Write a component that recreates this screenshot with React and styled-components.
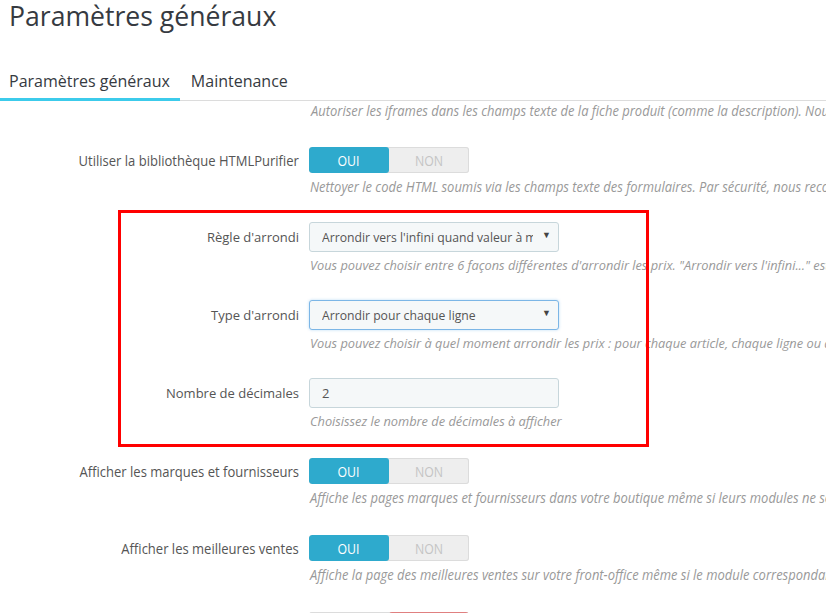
import React from 'react';
import styled, { createGlobalStyle, css } from 'styled-components';

const GlobalStyle = createGlobalStyle`
  html, body {
    margin: 0;
    padding: 0;
    background: #fff;
    overflow: hidden;
  }
  body {
    font-family: 'Open Sans', 'Noto Sans', sans-serif;
    color: #555;
  }
`;

const Page = styled.div`
  width: 826px;
  height: 613px;
  overflow: hidden;
`;

const Title = styled.h1`
  margin: 0;
  padding: 0 9px;
  font-size: 26.6px;
  font-weight: 400;
  line-height: 32px;
  color: #363a41;
  white-space: nowrap;
`;

const TabBar = styled.div`
  display: flex;
  margin-top: 37px;
  border-bottom: 1px solid #dcdcdc;
`;

const Tab = styled.div`
  padding: 0 10px 5px 9px;
  font-size: 16px;
  line-height: 24px;
  color: #363a41;
  border-bottom: 3px solid ${(p) => (p.$active ? '#3ccbeb' : 'transparent')};
  margin-bottom: -1px;
  & + & {
    padding-left: 11px;
  }
`;

const Form = styled.div`
  padding-top: 1px;
`;

const Row = styled.div`
  display: grid;
  grid-template-columns: 299px 1fr;
  column-gap: 10px;
  margin-bottom: ${(p) => p.$gap ?? 26}px;
`;

const Label = styled.div`
  height: ${(p) => p.$h}px;
  display: flex;
  align-items: center;
  justify-content: flex-end;
  font-size: 13px;
  color: #555;
  white-space: nowrap;
`;

/* the plain rows of the original page use a narrower, taller face */
const Narrow = styled.span`
  display: inline-block;
  white-space: nowrap;
  font-size: ${(p) => p.$size || 14}px;
  transform: scaleX(${(p) => p.$scale || 0.9});
  transform-origin: ${(p) => p.$from || 'left'} center;
`;

const Field = styled.div`
  display: flex;
  flex-direction: column;
  align-items: flex-start;
  min-width: 0;
`;

const Help = styled.div`
  margin-top: 5px;
  padding-left: 1px;
  font-size: 12.8px;
  font-style: italic;
  line-height: 17px;
  color: #999;
  white-space: nowrap;
`;

const TopHelp = styled(Help)`
  margin: 0 0 27px 310px;
`;

const Switch = styled.div`
  display: flex;
  width: 160px;
  height: 26px;
  border-radius: 3px;
  overflow: hidden;
  background: #eee;
  box-shadow: inset 0 0 0 1px #dcdcdc;
`;

const SwitchOption = styled.div`
  flex: 1;
  display: flex;
  align-items: center;
  justify-content: center;
  font-size: 14px;
  text-transform: uppercase;
  color: #c4c4c4;
  ${(p) =>
    p.$on &&
    css`
      background: ${p.$tone === 'no' ? '#e08080' : '#2eaacd'};
      color: #fff;
      border-radius: 3px;
    `}
  span {
    display: inline-block;
    transform: scaleX(0.88);
  }
`;

const SelectBox = styled.div`
  position: relative;
  box-sizing: border-box;
  width: 250px;
  height: 30px;
  padding: 0 25px 0 12px;
  display: flex;
  align-items: center;
  background: #f5f8f9;
  border: 1px solid ${(p) => (p.$focus ? '#7cb6e6' : '#c7d6db')};
  border-radius: 3px;
  box-shadow: ${(p) => (p.$focus ? '0 0 3px rgba(102, 175, 233, 0.45)' : 'none')};
  font-size: 12.2px;
  color: #555;
  white-space: nowrap;
`;

const SelectText = styled.span`
  overflow: hidden;
  white-space: nowrap;
  flex: 1;
`;

const Caret = styled.span`
  position: absolute;
  right: 7px;
  top: 7px;
  font-size: 9px;
  line-height: 10px;
  color: #444;
`;

const TextInput = styled.div`
  box-sizing: border-box;
  width: 250px;
  height: 30px;
  padding: 0 12px;
  display: flex;
  align-items: center;
  background: #f5f8f9;
  border: 1px solid #c7d6db;
  border-radius: 3px;
  font-size: 13px;
  color: #555;
`;

const Highlight = styled.div`
  position: relative;
  margin-bottom: 28px;
  & > ${Row}:last-child {
    margin-bottom: 0;
  }
`;

const RedFrame = styled.div`
  position: absolute;
  left: 118px;
  top: -12px;
  width: 531px;
  height: 237px;
  box-sizing: border-box;
  border: 3px solid #ff0000;
  pointer-events: none;
`;

function ToggleRow({ label, help, value = 'yes', gap }) {
  return (
    <Row $gap={gap}>
      <Label $h={26}>
        <Narrow $from="right" $scale={0.93}>{label}</Narrow>
      </Label>
      <Field>
        <Switch>
          <SwitchOption $on={value === 'yes'}><span>Oui</span></SwitchOption>
          <SwitchOption $on={value === 'no'} $tone="no"><span>Non</span></SwitchOption>
        </Switch>
        <Help>
          <Narrow $size={14.4}>{help}</Narrow>
        </Help>
      </Field>
    </Row>
  );
}

export default function App() {
  return (
    <Page>
      <GlobalStyle />
      <Title>Paramètres généraux</Title>
      <TabBar>
        <Tab $active>Paramètres généraux</Tab>
        <Tab>Maintenance</Tab>
      </TabBar>

      <Form>
        <TopHelp>
          <Narrow $size={14.4}>
            Autoriser les iframes dans les champs texte de la fiche produit (comme la description). Nous vous recommandons de laisser cette option désactivée.
          </Narrow>
        </TopHelp>

        <ToggleRow
          label="Utiliser la bibliothèque HTMLPurifier"
          help="Nettoyer le code HTML soumis via les champs texte des formulaires. Par sécurité, nous recommandons de laisser cette option activée."
        />

        <Highlight>
          <RedFrame />
          <Row>
            <Label $h={30}>Règle d'arrondi</Label>
            <Field>
              <SelectBox>
                <SelectText>Arrondir vers l'infini quand valeur à mi-chemin</SelectText>
                <Caret>▼</Caret>
              </SelectBox>
              <Help>
                Vous pouvez choisir entre 6 façons différentes d'arrondir les prix. "Arrondir vers l'infini..." est le comportement par défaut.
              </Help>
            </Field>
          </Row>
          <Row>
            <Label $h={30}>Type d'arrondi</Label>
            <Field>
              <SelectBox $focus>
                <SelectText>Arrondir pour chaque ligne</SelectText>
                <Caret>▼</Caret>
              </SelectBox>
              <Help>
                Vous pouvez choisir à quel moment arrondir les prix : pour chaque article, chaque ligne ou au total de la commande.
              </Help>
            </Field>
          </Row>
          <Row>
            <Label $h={30}>Nombre de décimales</Label>
            <Field>
              <TextInput>2</TextInput>
              <Help>Choisissez le nombre de décimales à afficher</Help>
            </Field>
          </Row>
        </Highlight>

        <ToggleRow
          gap={28}
          label="Afficher les marques et fournisseurs"
          help="Affiche les pages marques et fournisseurs dans votre boutique même si leurs modules ne sont pas activés."
        />
        <ToggleRow
          gap={28}
          label="Afficher les meilleures ventes"
          help="Affiche la page des meilleures ventes sur votre front-office même si le module correspondant est désactivé."
        />
        <ToggleRow
          gap={28}
          label="Activer le mode multiboutique"
          help="La multiboutique vous permet de gérer plusieurs boutiques depuis un seul back-office."
          value="no"
        />
      </Form>
    </Page>
  );
}
